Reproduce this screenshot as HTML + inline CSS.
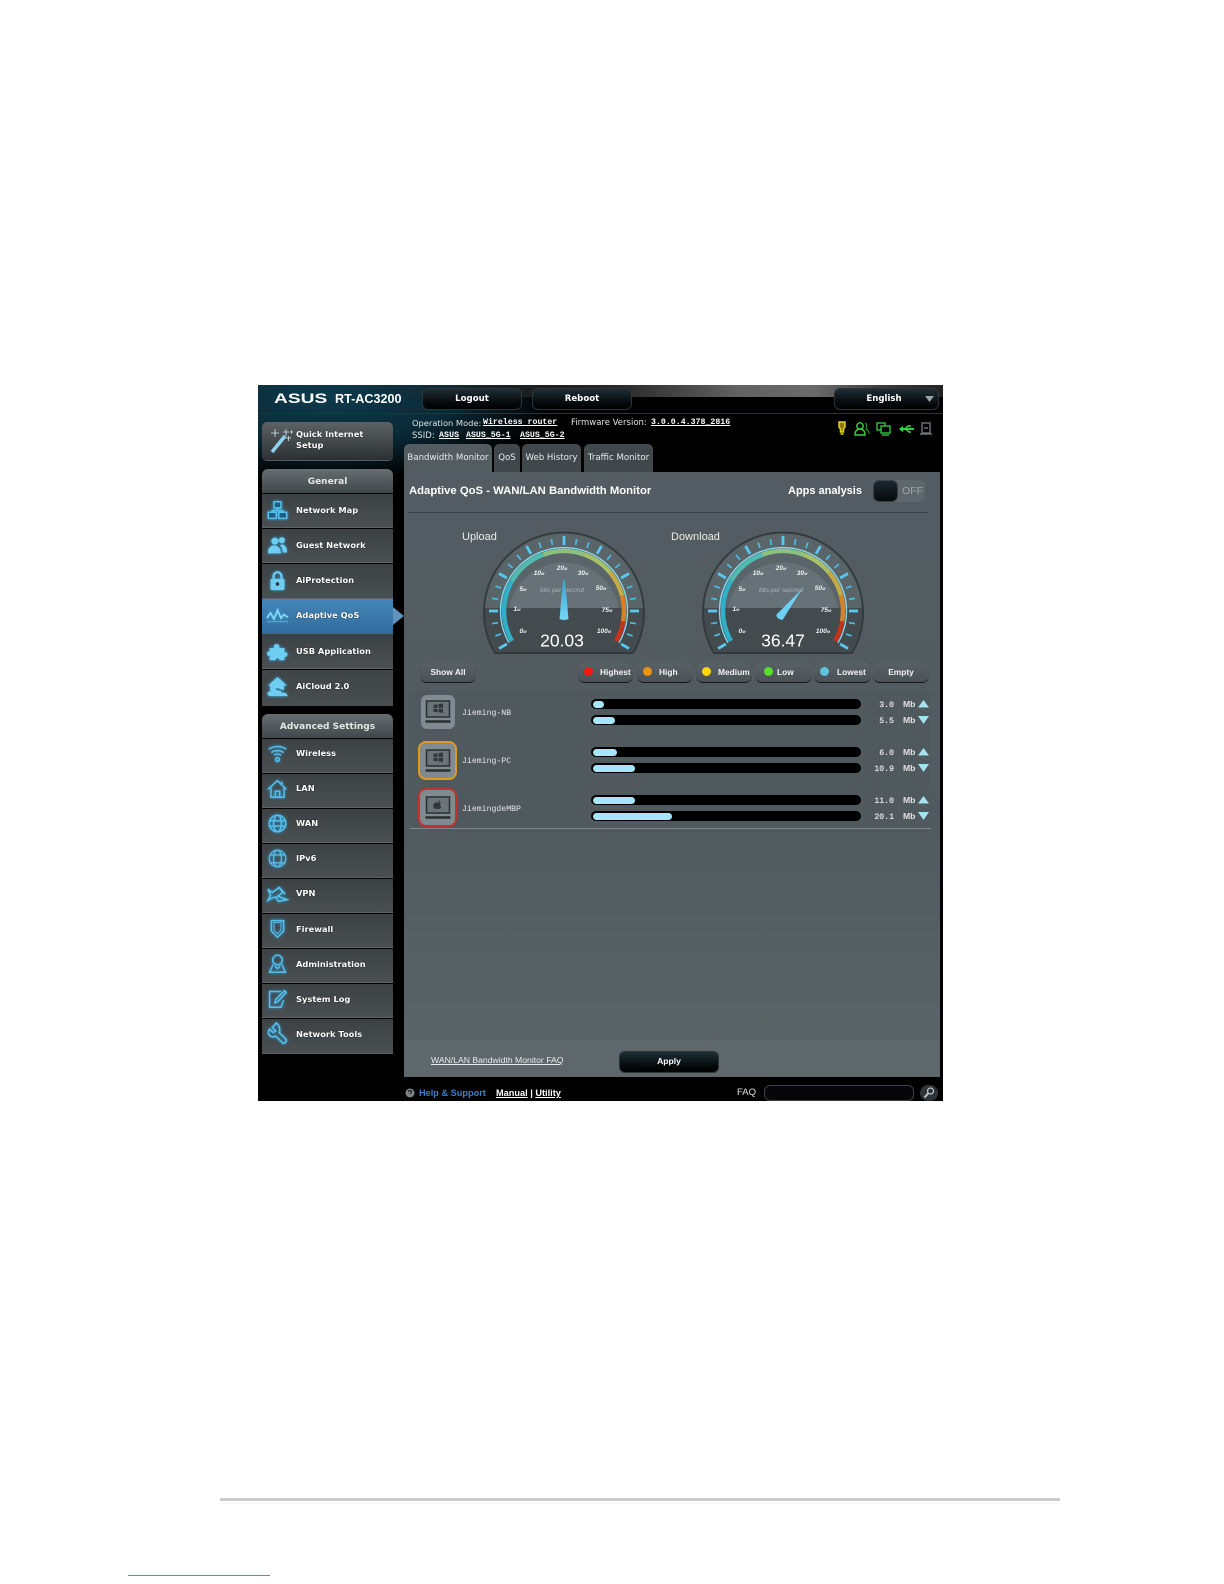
<!DOCTYPE html>
<html><head><meta charset="utf-8"><title>ASUS RT-AC3200 Adaptive QoS</title>
<style>
html,body{margin:0;padding:0;background:#fff;width:1224px;height:1584px;overflow:hidden}
#s{position:absolute;left:258px;top:385px;width:685px;height:716px;overflow:hidden;background:#000;filter:blur(.35px)}
#bg{position:absolute;inset:0;background:radial-gradient(ellipse 230px 85px at 70px 10px,#0e3a4c 0,#0a2a38 55%,rgba(0,0,0,0) 100%),linear-gradient(#000,#000)}
#tp{position:absolute;left:100px;top:0;width:585px;height:12px;background:linear-gradient(90deg,rgba(40,40,40,0),#2a2a2a 45%,#626262 65%,#6a6a6a 78%,#3a3a3a 90%,#222 100%)}
#hl{position:absolute;left:0;top:28px;width:685px;height:1px;background:#2c3236}
.a{position:absolute;box-sizing:border-box}
.t{position:absolute;line-height:12px;height:12px;white-space:nowrap;font-family:"Liberation Sans",sans-serif}
.dj{font-family:"DejaVu Sans",sans-serif}
.m{font-family:"Liberation Mono",monospace}
.btn{position:absolute;box-sizing:border-box;background:linear-gradient(#1d2f36,#05090b 70%,#000);border:1px solid #2d3337;border-radius:6px;color:#fff;font:bold 8.6px/20px "DejaVu Sans",sans-serif;text-align:center}
.item{position:absolute;left:4px;width:131px;box-sizing:border-box;background:linear-gradient(#3c4144,#4a4f52);border-top:1px solid #000;border-bottom:1px solid #5c6265}
.hd{position:absolute;left:4px;width:131px;height:24px;border-radius:6px 6px 0 0;background:linear-gradient(#666d70,#41484b);color:#e3e6e3;font:bold 9px/26px "DejaVu Sans",sans-serif;text-align:center}
.mt{position:absolute;left:38px;color:#fff;font:bold 8.3px/12px "DejaVu Sans",sans-serif;white-space:nowrap;text-shadow:0 0 1px #000}
.ic{position:absolute;left:9px;width:21px;height:21px;overflow:visible;filter:drop-shadow(0 0 1.5px #2aa8e0)}
.tab{position:absolute;top:59px;height:28px;border-radius:5px 5px 0 0;background:#40484c;color:#e6eaea;font:8.6px/28px "DejaVu Sans",sans-serif;text-align:center}
.f{position:absolute;top:278px;height:20px;box-sizing:border-box;background:linear-gradient(#586166,#4a5256);border-radius:7px;border-bottom:1.5px solid #141718;color:#f1f3f3;font:bold 8.4px/18px "Liberation Sans",sans-serif}
.f i{position:absolute;top:4px;width:9px;height:9px;border-radius:50%}
.f b{position:absolute;top:0;font-weight:bold}
.bar{position:absolute;left:333px;width:270px;height:10px;border-radius:5px;background:#000}
.bar i{position:absolute;left:1.5px;top:1.5px;height:7px;border-radius:3.5px;background:#a6e6fa}
.v{position:absolute;width:40px;left:596px;text-align:right;color:#e4e8e8;font:8.2px/12px "Liberation Mono",monospace;text-shadow:0 0 .5px #fff}
.mb{position:absolute;left:645px;color:#dfe4e4;font:bold 8.6px/12px "Liberation Sans",sans-serif}
.nm{position:absolute;left:204px;color:#e2e7e7;font:8.2px/12px "Liberation Mono",monospace;white-space:nowrap}
</style></head><body>
<div class="a" style="left:220px;top:1498px;width:840px;height:3px;background:#cbcbcb"></div>
<div class="a" style="left:220px;top:1503px;width:840px;height:1px;background:#f6f6f6"></div>
<div class="a" style="left:128px;top:1575px;width:142px;height:1px;background:#6a7fd0"></div>

<div id="s">
<div id="bg"></div><div id="tp"></div><div id="hl"></div>

<div class="t" style="left:16px;top:8px;width:40px;font:bold 13.5px/12px 'Liberation Sans',sans-serif;color:#fff;transform:scaleX(1.42);transform-origin:0 50%">ASUS</div>
<div class="t" style="left:77px;top:8px;font-weight:bold;font-size:12.6px;color:#fff">RT-AC3200</div>
<div class="btn" style="left:164px;top:3px;width:100px;height:22px">Logout</div>
<div class="btn" style="left:274px;top:3px;width:100px;height:22px">Reboot</div>
<div class="btn" style="left:576px;top:3px;width:100px;height:22px">English</div>
<div class="a" style="left:670px;top:3px;width:11px;height:22px;border-radius:0 6px 6px 0;background:linear-gradient(#1d2f36,#000);border:1px solid #2d3337;border-left:0"></div>
<svg class="a" style="left:667px;top:11px" width="10" height="7"><path d="M0 0h9L4.500 6z" fill="#9aa3a6"/></svg>

<div class="t dj" style="left:154px;top:32px;font-size:8.3px;color:#dfe3e3">Operation Mode:</div>
<div class="t m" style="left:225px;top:32px;font-size:8.25px;font-weight:bold;color:#fff;text-decoration:underline">Wireless router</div>
<div class="t dj" style="left:313px;top:32px;font-size:8.5px;color:#dfe3e3">Firmware Version:</div>
<div class="t m" style="left:393px;top:32px;font-size:8.25px;font-weight:bold;color:#fff;text-decoration:underline">3.0.0.4.378_2816</div>
<div class="t dj" style="left:154px;top:45px;font-size:8.5px;color:#dfe3e3">SSID:</div>
<div class="t m" style="left:181px;top:45px;font-size:8.25px;font-weight:bold;color:#fff;text-decoration:underline;letter-spacing:.1px">ASUS</div>
<div class="t m" style="left:208px;top:45px;font-size:8.25px;font-weight:bold;color:#fff;text-decoration:underline">ASUS_5G-1</div>
<div class="t m" style="left:262px;top:45px;font-size:8.25px;font-weight:bold;color:#fff;text-decoration:underline">ASUS_5G-2</div>

<!-- status icons -->
<svg class="a" style="left:576px;top:36px;overflow:visible" width="100" height="16" fill="none">
<path d="M5 1h6v5l-1.500 2v3h-3V8L5 6z" stroke="#e8d020" stroke-width="1.500" fill="#8a7a10"/><path d="M6.500 13h3" stroke="#e8d020" stroke-width="1.500"/>
<circle cx="26" cy="5" r="3.200" stroke="#39d044" stroke-width="1.400"/><path d="M21 14c0-4 2-6 5-6s5 2 5 6z" stroke="#39d044" stroke-width="1.400"/><path d="M31 2c2 1 2 4 1 6 2 1 3 3 3 5" stroke="#2aa036" stroke-width="1"/>
<rect x="43" y="2" width="8" height="7" stroke="#2fc43c" stroke-width="1.400"/><rect x="47" y="5" width="9" height="7" stroke="#2fc43c" stroke-width="1.400" fill="#000"/><path d="M48 14h7" stroke="#2fc43c" stroke-width="1.400"/>
<path d="M66 8h14" stroke="#33e040" stroke-width="1.800"/><path d="M65 8l4-3v6z" fill="#33e040"/><path d="M71 8l3-3h3M72 8l3 3h2" stroke="#33e040" stroke-width="1.400"/>
<rect x="88" y="2" width="8" height="10" stroke="#6d7477" stroke-width="1.400"/><path d="M86 13h12M90 7h4" stroke="#6d7477" stroke-width="1.400"/>
</svg>

<!-- quick setup -->
<div class="a" style="left:4px;top:37px;width:131px;height:39px;border-radius:5px;background:linear-gradient(#5c6164,#33383a 85%,#2b2f31);border-bottom:1px solid #565c5f"></div>
<svg class="a" style="left:8px;top:41px" width="30" height="30" fill="none"><path d="M6 26L19 10" stroke="#8fd4f2" stroke-width="3.500"/><path d="M5 7h8M9 3v8M20 3v7M17 6h6M24 6h3M25.500 4.500v3M20 12h5M22.500 10v5" stroke="#cfe6ef" stroke-width=".8"/></svg>
<div class="mt" style="top:44px;line-height:10.500px">Quick Internet<br>Setup</div>

<!-- general -->
<div class="hd" style="top:84px">General</div>
<div class="item" style="top:108px;height:35px"></div>
<div class="item" style="top:143px;height:35px"></div>
<div class="item" style="top:178px;height:36px"></div>
<div class="a" style="left:4px;top:214px;width:131px;height:35px;background:linear-gradient(#4486b8,#2f6c9c)"></div>
<svg class="a" style="left:135px;top:222px" width="12" height="18"><path d="M0 0L11 9 0 18z" fill="#5f93b9"/></svg>
<div class="item" style="top:249px;height:35px;border-top:0"></div>
<div class="item" style="top:284px;height:37px;background:linear-gradient(#3f4447,#484d50);border-bottom:0"></div>
<div class="mt" style="top:119px">Network Map</div>
<div class="mt" style="top:154px">Guest Network</div>
<div class="mt" style="top:189px">AiProtection</div>
<div class="mt" style="top:224px">Adaptive QoS</div>
<div class="mt" style="top:260px">USB Application</div>
<div class="mt" style="top:295px">AiCloud 2.0</div>

<svg class="ic" style="top:115px" viewBox="0 0 24 24" fill="none" stroke="#58bfec" stroke-width="1.700"><path d="M8 2h8v7H8zM1.500 14h9v7h-9zM13.500 14h9v7h-9z" fill="#1f5e80"/><path d="M12 9v3M6 14v-2h12v2"/></svg>
<svg class="ic" style="top:150px" viewBox="0 0 24 24" fill="#6fcdf2"><circle cx="9" cy="7" r="4"/><circle cx="17" cy="6" r="3.500"/><path d="M1 21c0-6 3-9 7-9s8 3 8 9z"/><path d="M16 11c4-1 7 3 7 9h-5c0-4-1-6-3-8z"/></svg>
<svg class="ic" style="top:185px" viewBox="0 0 24 24"><path d="M7.500 10V7a4.500 4.500 0 0 1 9 0v3" fill="none" stroke="#6fcdf2" stroke-width="2.500"/><rect x="4" y="10" width="16" height="13" rx="2" fill="#6fcdf2"/><circle cx="12" cy="16" r="2" fill="#24343c"/></svg>
<svg class="ic" style="top:220px" viewBox="0 0 24 24" fill="none" stroke="#8ed6f4" stroke-width="2"><path d="M0 15l4-6 4 7 4-10 4 9 3-4 5 3"/><path d="M0 19h24" stroke-width="1" opacity=".6"/></svg>
<svg class="ic" style="top:256px" viewBox="0 0 24 24" fill="#6fcdf2"><path d="M3 8h5c-2-6 8-6 6 0h6v5c4-2 5 6 0 5v4H14c1-3-5-3-4 0H3v-5c-4 1-4-6 0-5z"/></svg>
<svg class="ic" style="top:291px" viewBox="0 0 24 24" fill="#6fcdf2"><path d="M12 1L1 11h2.500v5h4.500c1.500-2 5-3 7-1l4.500 1v-5H23z"/><path d="M4 23c-4.500 0-4.500-5.500-.5-5.500 1-3 7-3.500 8.500-.5 2-1 4.500 0 4.500 2 4 0 7 1 7 4z"/></svg>

<!-- advanced -->
<div class="hd" style="top:329px">Advanced Settings</div>
<div class="item" style="top:353px;height:35px"></div>
<div class="item" style="top:388px;height:35px"></div>
<div class="item" style="top:423px;height:35px"></div>
<div class="item" style="top:458px;height:35px"></div>
<div class="item" style="top:493px;height:35px"></div>
<div class="item" style="top:528px;height:35px"></div>
<div class="item" style="top:563px;height:35px"></div>
<div class="item" style="top:598px;height:35px"></div>
<div class="item" style="top:633px;height:36px"></div>
<div class="mt" style="top:362px">Wireless</div>
<div class="mt" style="top:397px">LAN</div>
<div class="mt" style="top:432px">WAN</div>
<div class="mt" style="top:467px">IPv6</div>
<div class="mt" style="top:502px">VPN</div>
<div class="mt" style="top:538px">Firewall</div>
<div class="mt" style="top:573px">Administration</div>
<div class="mt" style="top:608px">System Log</div>
<div class="mt" style="top:643px">Network Tools</div>

<svg class="ic" style="top:358px" viewBox="0 0 24 24" fill="none" stroke="#58bfec" stroke-width="1.700"><path d="M2 7c6-4 14-4 20 0M5 11c4-3 10-3 14 0M8 14c3-2 5-2 8 0"/><circle cx="12" cy="19" r="2.200"/></svg>
<svg class="ic" style="top:393px" viewBox="0 0 24 24" fill="none" stroke="#58bfec" stroke-width="1.700"><path d="M1 13L12 3l10 10M4.500 11v11h15V11M9.500 22v-7h5v7M17 4v3"/></svg>
<svg class="ic" style="top:428px" viewBox="0 0 24 24" fill="none" stroke="#58bfec" stroke-width="1.700"><circle cx="12" cy="12" r="9.500"/><ellipse cx="12" cy="12" rx="4.500" ry="9.500"/><path d="M3 9h18M3 15h18"/></svg>
<svg class="ic" style="top:463px" viewBox="0 0 24 24" fill="none" stroke="#58bfec" stroke-width="1.400"><circle cx="12" cy="12" r="9.500"/><ellipse cx="12" cy="12" rx="4.500" ry="9.500"/><path d="M3 8h18M3 17h18"/></svg>
<svg class="ic" style="top:498px" viewBox="0 0 24 24" fill="none" stroke="#58bfec" stroke-width="1.700"><path d="M1 7l5 4 8-6 4 6-6 4 11 4-10 2-3-5-4 1-5 3 3-6z"/><path d="M14 5l7 8"/></svg>
<svg class="ic" style="top:533px" viewBox="0 0 24 24" fill="none" stroke="#58bfec" stroke-width="1.700"><path d="M5 3h14v12l-7 7-7-7z"/><path d="M8 5h8v9l-4 4-4-4z" stroke-width="1"/></svg>
<svg class="ic" style="top:568px" viewBox="0 0 24 24" fill="none" stroke="#58bfec" stroke-width="1.700"><circle cx="12" cy="8" r="5.500"/><path d="M7 13l-4 9h18l-4-9M9 15l3 3 3-3"/></svg>
<svg class="ic" style="top:603px" viewBox="0 0 24 24" fill="none" stroke="#58bfec" stroke-width="1.700"><path d="M16 4H3v18h13l3-8"/><path d="M9 17l1-4L20 3l2 2-10 11z"/></svg>
<svg class="ic" style="top:638px" viewBox="0 0 24 24" fill="none" stroke="#58bfec" stroke-width="1.800"><path d="M10 1L6 5l4 4-3 2-4-4c-4 5 1 11 7 8l8 8c2 1 5-2 4-4l-8-8c2-6-2-11-4-11z"/></svg>

<!-- tabs -->
<div class="tab" style="left:146px;width:88px;background:#525c61">Bandwidth Monitor</div>
<div class="tab" style="left:236px;width:26px">QoS</div>
<div class="tab" style="left:264px;width:59px">Web History</div>
<div class="tab" style="left:326px;width:69px">Traffic Monitor</div>

<!-- panel -->
<div class="a" style="left:146px;top:87px;width:536px;height:605px;background:linear-gradient(#525c62,#515b5f 60%,#5c6568);border-radius:0 0 2px 2px"></div>
<div class="t" style="left:151px;top:100px;font-weight:bold;font-size:11.3px;color:#fff">Adaptive QoS - WAN/LAN Bandwidth Monitor</div>
<div class="t" style="left:530px;top:100px;font-weight:bold;font-size:11px;color:#fff">Apps analysis</div>
<div class="a" style="left:615px;top:95px;width:52px;height:22px;border-radius:6px;background:#5e676b"></div>
<div class="a" style="left:615px;top:95px;width:25px;height:22px;border-radius:6px;background:linear-gradient(#1b2a30,#05090b);border:1px solid #3b4347"></div>
<div class="t" style="left:644px;top:100px;font-size:10.500px;color:#9ca5a8">OFF</div>
<div class="a" style="left:150px;top:127px;width:520px;height:1px;background:#394347"></div>

<div class="t" style="left:204px;top:146px;font-size:11px;color:#e9efe9">Upload</div>
<div class="t" style="left:413px;top:146px;font-size:11px;color:#e9efe0">Download</div>

<svg class="a" style="left:0;top:0;overflow:visible" width="685" height="716">
<defs>
<g id="face">
<path d="M-69 42A80 80 0 1 1 69 42Z" fill="#5a656a" stroke="#343c40" stroke-width="2"/>
<path d="M-79.800 -3H79.800A80 80 0 0 1 69 42H-69A80 80 0 0 1 -79.800 -3Z" fill="#444b4f"/>
<path d="M-55 -3A56 56 0 0 1 55 -3Z" fill="#667277"/>
<path d="M-69 42A80 80 0 0 1 -79.800 -3" fill="none" stroke="#343c40" stroke-width="2"/>
<path d="M69 42A80 80 0 0 0 79.800 -3" fill="none" stroke="#343c40" stroke-width="2"/>
<path d="M-69 42H69" stroke="#2f373a" stroke-width="1.500"/>
<g fill="none" stroke-width="4.500">
<path d="M-52 30A60 60 0 0 1 -52 -30" stroke="#2fb0c6"/>
<path d="M-52 -30A60 60 0 0 1 -20.500 -56.400" stroke="#50bbb0"/>
<path d="M-20.500 -56.400A60 60 0 0 1 20.500 -56.400" stroke="#8cc182"/>
<path d="M20.500 -56.400A60 60 0 0 1 46 -38.600" stroke="#a8c06a"/>
<path d="M46 -38.600A60 60 0 0 1 58 -15.500" stroke="#c6aa44"/>
<path d="M58 -15.500A60 60 0 0 1 59.100 10.400" stroke="#d48226"/>
<path d="M59.100 10.400A60 60 0 0 1 52 30" stroke="#c5321a"/>
</g>
<path d="M-55 31.800A63.500 63.500 0 1 1 55 31.800" fill="none" stroke="#86d6ee" stroke-width="1.400"/>
<g stroke="#48bde4" stroke-width="1.700">
<path transform="rotate(-120)" d="M0 -66V-75" stroke-width="2.800" stroke="#58c8f0"/>
<path transform="rotate(-110)" d="M0 -67V-73"/><path transform="rotate(-100)" d="M0 -67V-73"/>
<path transform="rotate(-90)" d="M0 -66V-75" stroke-width="2.800" stroke="#58c8f0"/>
<path transform="rotate(-80)" d="M0 -67V-73"/><path transform="rotate(-70)" d="M0 -67V-73"/>
<path transform="rotate(-60)" d="M0 -66V-75" stroke-width="2.800" stroke="#58c8f0"/>
<path transform="rotate(-50)" d="M0 -67V-73"/><path transform="rotate(-40)" d="M0 -67V-73"/>
<path transform="rotate(-30)" d="M0 -66V-75" stroke-width="2.800" stroke="#58c8f0"/>
<path transform="rotate(-20)" d="M0 -67V-73"/><path transform="rotate(-10)" d="M0 -67V-73"/>
<path d="M0 -66V-75" stroke-width="2.800" stroke="#58c8f0"/>
<path transform="rotate(10)" d="M0 -67V-73"/><path transform="rotate(20)" d="M0 -67V-73"/>
<path transform="rotate(30)" d="M0 -66V-75" stroke-width="2.800" stroke="#58c8f0"/>
<path transform="rotate(40)" d="M0 -67V-73"/><path transform="rotate(50)" d="M0 -67V-73"/>
<path transform="rotate(60)" d="M0 -66V-75" stroke-width="2.800" stroke="#58c8f0"/>
<path transform="rotate(70)" d="M0 -67V-73"/><path transform="rotate(80)" d="M0 -67V-73"/>
<path transform="rotate(90)" d="M0 -66V-75" stroke-width="2.800" stroke="#58c8f0"/>
<path transform="rotate(100)" d="M0 -67V-73"/><path transform="rotate(110)" d="M0 -67V-73"/>
<path transform="rotate(120)" d="M0 -66V-75" stroke-width="2.800" stroke="#58c8f0"/>
</g>
</g>
<linearGradient id="nd" x1="0" y1="0" x2="0" y2="1"><stop offset="0" stop-color="#3a9fcc"/><stop offset="1" stop-color="#74d8f8"/></linearGradient>
</defs>

<g transform="translate(306 226)">
<use href="#face"/>
<g font-family="Liberation Sans,sans-serif" font-style="italic" font-weight="bold" font-size="6.500" fill="#eef2f2" text-anchor="middle">
<text x="-25" y="-36">10<tspan font-size="4">M</tspan></text>
<text x="-2" y="-41">20<tspan font-size="4">M</tspan></text>
<text x="19" y="-36">30<tspan font-size="4">M</tspan></text>
<text x="-41" y="-20">5<tspan font-size="4">M</tspan></text>
<text x="37" y="-21">50<tspan font-size="4">M</tspan></text>
<text x="-47" y="0">1<tspan font-size="4">M</tspan></text>
<text x="43" y="1">75<tspan font-size="4">M</tspan></text>
<text x="-41" y="22">0<tspan font-size="4">M</tspan></text>
<text x="40" y="22">100<tspan font-size="4">M</tspan></text>
<text x="-2" y="-19" font-size="6.500" font-weight="normal" fill="#a9b3b6">bits per second</text>
</g>
<path d="M-1 -31L1 -31L4.500 8Q0 10 -4.500 8Z" fill="url(#nd)"/>
<text x="-2" y="35.500" font-family="Liberation Sans,sans-serif" font-size="17.500" fill="#fff" text-anchor="middle">20.03</text>
</g>

<g transform="translate(525 226)">
<use href="#face"/>
<g font-family="Liberation Sans,sans-serif" font-style="italic" font-weight="bold" font-size="6.500" fill="#eef2f2" text-anchor="middle">
<text x="-25" y="-36">10<tspan font-size="4">M</tspan></text>
<text x="-2" y="-41">20<tspan font-size="4">M</tspan></text>
<text x="19" y="-36">30<tspan font-size="4">M</tspan></text>
<text x="-41" y="-20">5<tspan font-size="4">M</tspan></text>
<text x="37" y="-21">50<tspan font-size="4">M</tspan></text>
<text x="-47" y="0">1<tspan font-size="4">M</tspan></text>
<text x="43" y="1">75<tspan font-size="4">M</tspan></text>
<text x="-41" y="22">0<tspan font-size="4">M</tspan></text>
<text x="40" y="22">100<tspan font-size="4">M</tspan></text>
<text x="-2" y="-19" font-size="6.500" font-weight="normal" fill="#a9b3b6">bits per second</text>
</g>
<path d="M19 -22L-6.500 3.500Q-7 8 -0.500 9Z" fill="#6cd2f4"/>
<text x="0" y="35.500" font-family="Liberation Sans,sans-serif" font-size="17.500" fill="#fff" text-anchor="middle">36.47</text>
</g>
</svg>

<!-- filters -->
<div class="f" style="left:162px;width:56px;text-align:center">Show All</div>
<div class="f" style="left:320px;width:55px"><i style="left:6px;background:#f01b10"></i><b style="left:22px">Highest</b></div>
<div class="f" style="left:379px;width:56px"><i style="left:6px;background:#ef930f"></i><b style="left:22px">High</b></div>
<div class="f" style="left:438px;width:56px"><i style="left:6px;background:#ffd60a"></i><b style="left:22px">Medium</b></div>
<div class="f" style="left:497px;width:57px"><i style="left:9px;background:#57e02c"></i><b style="left:22px">Low</b></div>
<div class="f" style="left:556px;width:57px"><i style="left:6px;background:#5fc4e0"></i><b style="left:23px">Lowest</b></div>
<div class="f" style="left:615px;width:56px;text-align:center">Empty</div>

<!-- list -->
<div class="a" style="left:152px;top:305px;width:521px;height:139px;background:#50595d;border-radius:6px 6px 0 0;border-bottom:1px solid #7d878b"></div>

<div class="a" style="left:163px;top:310px;width:34px;height:34px;background:#808b91;border-radius:6px"><svg class="a" style="left:0;top:0" width="34" height="34" fill="none"><rect x="5.500" y="6" width="23" height="16" fill="#6a7479" stroke="#2a3033" stroke-width="1.500"/><path d="M12.500 10l4-.7v3.600h-4zM17.500 9.200l4.500-.8v4.500h-4.500zM12.500 13.800h4v3.500l-4-.6zM17.500 13.800h4.500v4.200l-4.500-.7z" fill="#30373a"/><path d="M4.500 26.500h25" stroke="#2a3033" stroke-width="2.500"/></svg></div>
<div class="a" style="left:160px;top:356px;width:39px;height:39px;border:2px solid #dd9a22;border-radius:8px;background:#808b91"><svg class="a" style="left:1px;top:1px" width="34" height="34" fill="none"><rect x="5.500" y="6" width="23" height="16" fill="#6a7479" stroke="#2a3033" stroke-width="1.500"/><path d="M12.500 10l4-.7v3.600h-4zM17.500 9.200l4.500-.8v4.500h-4.500zM12.500 13.800h4v3.500l-4-.6zM17.500 13.800h4.500v4.200l-4.500-.7z" fill="#30373a"/><path d="M4.500 26.500h25" stroke="#2a3033" stroke-width="2.500"/></svg></div>
<div class="a" style="left:160px;top:403px;width:39px;height:39px;border:2px solid #c0342a;border-radius:8px;background:#808b91"><svg class="a" style="left:1px;top:1px" width="34" height="34" fill="none"><rect x="5.500" y="6" width="23" height="16" fill="#6a7479" stroke="#2a3033" stroke-width="1.500"/><path d="M14 12c1.500-1 2.500-.5 3 0 .8-.6 2-1 3 0-1.500 1.200-1 3 .3 3.500-.5 1.500-1.500 2.500-2.300 2.500-1 0-1-.4-2-.4s-1 .4-2 .4c-1.500-.6-3-4.500 0-6zM17 11.500c0-1 .7-2 1.800-2.200 0 1-.7 2-1.800 2.200z" fill="#30373a"/><path d="M4.500 26.500h25" stroke="#2a3033" stroke-width="2.500"/></svg></div>

<div class="nm" style="top:323px">Jieming-NB</div>
<div class="nm" style="top:371px">Jieming-PC</div>
<div class="nm" style="top:419px">JiemingdeMBP</div>

<div class="bar" style="top:314px"><i style="width:11px"></i></div>
<div class="bar" style="top:330px"><i style="width:22px"></i></div>
<div class="bar" style="top:362px"><i style="width:24px"></i></div>
<div class="bar" style="top:378px"><i style="width:42px"></i></div>
<div class="bar" style="top:410px"><i style="width:42px"></i></div>
<div class="bar" style="top:426px"><i style="width:79px"></i></div>

<div class="v" style="top:314.500px">3.0</div><div class="mb" style="top:313px">Mb</div>
<div class="v" style="top:330.500px">5.5</div><div class="mb" style="top:329px">Mb</div>
<div class="v" style="top:362.500px">6.0</div><div class="mb" style="top:361px">Mb</div>
<div class="v" style="top:378.500px">10.9</div><div class="mb" style="top:377px">Mb</div>
<div class="v" style="top:410.500px">11.0</div><div class="mb" style="top:409px">Mb</div>
<div class="v" style="top:426.500px">20.1</div><div class="mb" style="top:425px">Mb</div>
<svg class="a" style="left:660px;top:314px;overflow:visible" width="12" height="130" fill="#a5e4ee">
<path d="M5.500 1L11 8.500H0zM5.500 25L11 17H0zM5.500 49L11 56.500H0zM5.500 73L11 65H0zM5.500 97L11 104.500H0zM5.500 121L11 113H0z"/></svg>

<!-- bottom -->
<div class="a" style="left:146px;top:655px;width:536px;height:37px;background:#5e676c"></div>
<div class="t" style="left:173px;top:669px;font-size:8.650px;color:#e8eded;text-decoration:underline">WAN/LAN Bandwidth Monitor FAQ</div>
<div class="btn" style="left:361px;top:666px;width:100px;height:22px;font:bold 8.600px/19px 'Liberation Sans',sans-serif">Apply</div>

<!-- footer -->
<svg class="a" style="left:147px;top:703px" width="10" height="10"><circle cx="5" cy="5" r="4.500" fill="#7a8488"/><path d="M3.500 4c0-2 3-2 3 0 0 1-1.500 1-1.500 2" stroke="#111" fill="none"/></svg>
<div class="t" style="left:161px;top:702px;font-weight:bold;font-size:9.200px;color:#3c7fc6">Help &amp; Support</div>
<div class="t" style="left:238px;top:702px;font-weight:bold;font-size:9.200px;color:#fff"><span style="text-decoration:underline">Manual</span> | <span style="text-decoration:underline">Utility</span></div>
<div class="t" style="left:479px;top:702px;font-size:9.500px;color:#dfe3e3">FAQ</div>
<div class="a" style="left:506px;top:700px;width:150px;height:16px;border:1px solid #3a4145;border-radius:6px;background:#050708"></div>
<div class="a" style="left:662px;top:700px;width:18px;height:16px;border-radius:8px;background:#2e3437"></div>
<svg class="a" style="left:664px;top:701px" width="14" height="14" fill="none" stroke="#c8cfd2" stroke-width="1.200"><circle cx="8.500" cy="5" r="3"/><path d="M6 7.500L2.500 11.500" stroke-width="1.800"/></svg>
</div>
</body></html>
